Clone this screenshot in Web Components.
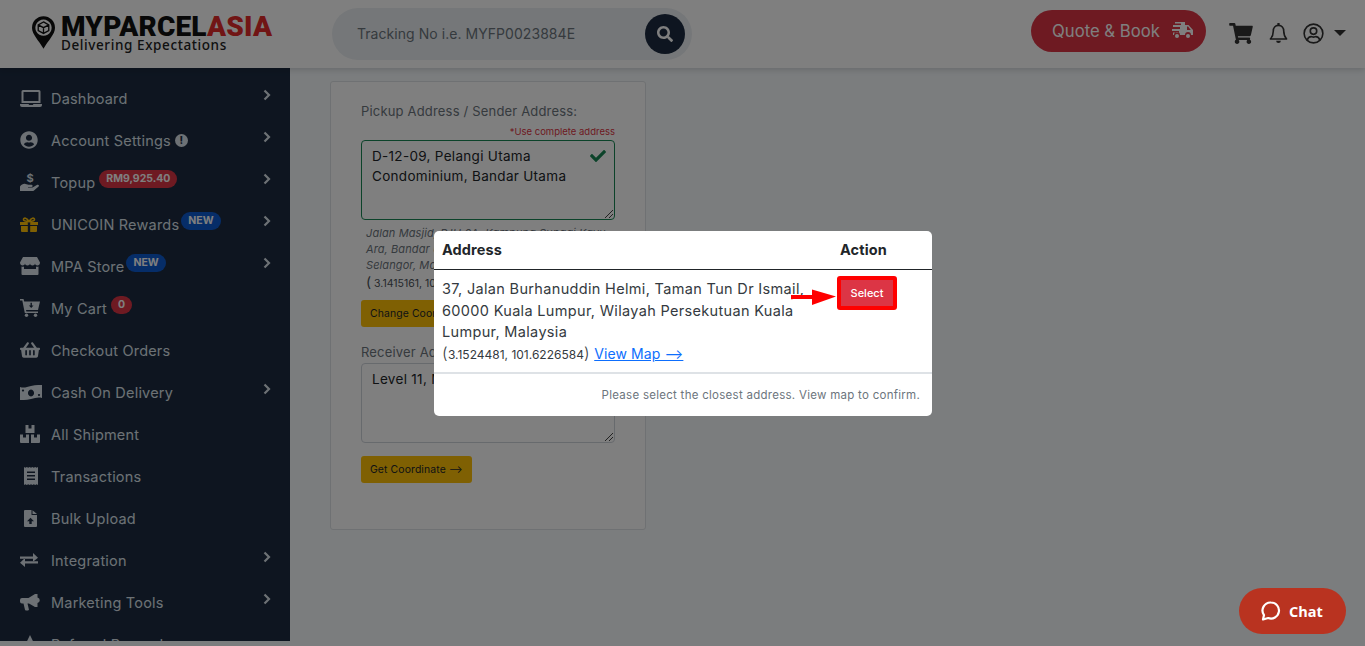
<!DOCTYPE html>
<html lang="en">
<head>
<meta charset="utf-8">
<title>MyParcelAsia</title>
<style>
  html, body { margin: 0; height: 100%; overflow: hidden; background: #f6fafd; }
  body { font-family: Inter, "Noto Sans", sans-serif; }
</style>
</head>
<body>
<mpa-app></mpa-app>

<script>
const ICONS = {
  laptop: '<svg viewBox="0 0 22 17" width="22" height="17"><path fill="currentColor" d="M3 0h16a1.5 1.5 0 0 1 1.5 1.5V13h-19V1.500A1.500 1.500 0 0 1 3 0zm.5 2v9h15V2z" fill-rule="evenodd"/><path fill="currentColor" d="M0 14h8.500l.7 1h3.600l.7-1H22v1a2 2 0 0 1-2 2H2a2 2 0 0 1-2-2z"/></svg>',
  user: '<svg viewBox="0 0 496 512" width="18" height="18"><path fill="currentColor" d="M248 8C111 8 0 119 0 256s111 248 248 248 248-111 248-248S385 8 248 8zm0 96c48.600 0 88 39.400 88 88s-39.400 88-88 88-88-39.400-88-88 39.400-88 88-88zm0 344c-58.700 0-111.300-26.600-146.500-68.200 18.800-35.400 55.600-59.800 98.500-59.800 2.400 0 4.800.4 7.100 1.100 13 4.200 26.600 6.900 40.900 6.900 14.300 0 28-2.700 40.900-6.900 2.300-.7 4.700-1.100 7.100-1.100 42.900 0 79.700 24.400 98.500 59.800C359.300 421.400 306.700 448 248 448z"/></svg>',
  topup: '<svg viewBox="0 0 20 20" width="20" height="20"><path fill="currentColor" d="M0 14.500c1.500-2 3.500-3 5.500-2.500l3 .8h3a1 1 0 0 1 0 2.200H8v.6h4.500l4.800-2.800c1.300-.6 2.300.9 1.300 1.800l-4.600 3.800c-.5.4-1 .6-1.600.6H0z"/><text x="10" y="9.500" font-size="11" font-weight="700" text-anchor="middle" fill="currentColor" font-family="Inter">$</text></svg>',
  gift: '<svg viewBox="0 0 18 15" width="18" height="15"><path fill="currentColor" d="M0 5h7.800v3H0zM10.200 5H18v3h-7.800zM1 9h6.800v6H2a1 1 0 0 1-1-1zM10.200 9H17v5a1 1 0 0 1-1 1h-5.800z"/><path fill="none" stroke="currentColor" stroke-width="1.600" d="M9 4.500C7 .5 3.500.3 3.500 2.600 3.500 4 5.500 4.500 9 4.500c3.500 0 5.500-.5 5.500-1.900C14.500.3 11 .5 9 4.500z"/></svg>',
  store: '<svg viewBox="0 0 20 18" width="20" height="18"><path fill="currentColor" d="M3 0h14l3 5.500c0 2-1.200 3-2.500 3S15 7.500 15 6.500c0 1-1.200 2-2.500 2S10 7.500 10 6.500c0 1-1.200 2-2.500 2S5 7.500 5 6.500c0 1-1.200 2-2.500 2S0 7.500 0 5.500z"/><path fill="currentColor" fill-rule="evenodd" d="M1.500 9.500c1 .3 2 .2 2.500 0V12h12V9.500c.5.200 1.500.3 2.500 0V17a1 1 0 0 1-1 1h-15a1 1 0 0 1-1-1z"/></svg>',
  cart: '<svg viewBox="0 0 20 18" width="20" height="18"><path fill="currentColor" d="M0 0h3.500l.7 2.500H20l-2 8.500H6l.4 1.500H18v1.500H4.800L2.300 1.500H0z"/><circle cx="6.500" cy="16.300" r="1.700" fill="currentColor"/><circle cx="15.500" cy="16.300" r="1.700" fill="currentColor"/><path fill="#1c2b41" d="M10.500 3.800h1.400v2.600h1.600l-2.300 2.600-2.300-2.600h1.600z"/></svg>',
  basket: '<svg viewBox="0 0 576 512" width="20" height="18"><path fill="currentColor" d="M576 216v16c0 13.255-10.745 24-24 24h-8l-26.113 182.788C514.509 462.435 494.257 480 470.370 480H105.630c-23.887 0-44.139-17.565-47.518-41.212L32 256h-8c-13.255 0-24-10.745-24-24v-16c0-13.255 10.745-24 24-24h67.341l106.780-146.821c10.395-14.292 30.407-17.453 44.701-7.058 14.293 10.395 17.453 30.408 7.058 44.701L170.477 192h235.046L326.120 82.821c-10.395-14.292-7.234-34.306 7.059-44.701 14.291-10.395 34.306-7.235 44.701 7.058L484.659 192H552c13.255 0 24 10.745 24 24zM312 392V280c0-13.255-10.745-24-24-24s-24 10.745-24 24v112c0 13.255 10.745 24 24 24s24-10.745 24-24zm112 0V280c0-13.255-10.745-24-24-24s-24 10.745-24 24v112c0 13.255 10.745 24 24 24s24-10.745 24-24zm-224 0V280c0-13.255-10.745-24-24-24s-24 10.745-24 24v112c0 13.255 10.745 24 24 24s24-10.745 24-24z"/></svg>',
  cash: '<svg viewBox="0 0 22 15" width="22" height="15"><path fill="currentColor" fill-rule="evenodd" d="M0 2c4 1.500 7-.2 11-1s7-1.200 11-1v13c-4-1.200-7 .2-11 1s-7 1.200-11 1zm11 2.500a3 3.500 0 1 0 .01 0zM3 4.500a1 1 0 1 0 .01 0zM19 9a1 1 0 1 0 .01 0z"/></svg>',
  boxes: '<svg viewBox="0 0 20 18" width="20" height="18"><path fill="currentColor" d="M5.500 0h3v3.500h3V0h3v8h-9zM0 9.500h3v3h3v-3h3V18H1a1 1 0 0 1-1-1zM11 9.500h3v3h3v-3h3V17a1 1 0 0 1-1 1h-8z"/></svg>',
  receipt: '<svg viewBox="0 0 14 18" width="14" height="18"><path fill="currentColor" fill-rule="evenodd" d="M0 0l1.400.8L2.800 0l1.400.8L5.600 0 7 .8 8.400 0l1.400.8L11.200 0l1.400.8L14 0v18l-1.400-.8-1.400.8-1.400-.8-1.400.8L7 17.200 5.600 18l-1.400-.8-1.400.8-1.400-.8L0 18zM3 4.500v1.400h8V4.500zm0 3.500v1.400h8V8zm0 3.500v1.400h8v-1.400z"/></svg>',
  upload: '<svg viewBox="0 0 13 17" width="13" height="17"><path fill="currentColor" fill-rule="evenodd" d="M1 0h6.500v4.500a.5.500 0 0 0 .5.500h5v11a1 1 0 0 1-1 1H1a1 1 0 0 1-1-1V1a1 1 0 0 1 1-1zM6.500 7.800L3 11.300h2.300V14h2.400v-2.700H10z"/><path fill="currentColor" d="M8.500.2L13 4h-4.500z"/></svg>',
  exchange: '<svg viewBox="0 0 18 14" width="18" height="14"><path fill="currentColor" d="M0 3.500h13V0l5 4.800-5 4-.0-3.100H0zM18 8.300H5V5l-5 4.700 5 4.300v-3.500h13z"/></svg>',
  bullhorn: '<svg viewBox="0 0 20 17" width="20" height="17"><path fill="currentColor" d="M0 6a2 2 0 0 1 2-2h6.500L15 0h2.500v3.500a2.800 2.800 0 0 1 0 5.500V13H15l-6-3.500H7.500L8.800 15a1 1 0 0 1-1 1.500H6a1 1 0 0 1-1-.8L3.500 9.500H2a2 2 0 0 1-2-2z"/></svg>',
  star: '<svg viewBox="0 0 20 18" width="20" height="18"><path fill="currentColor" d="M10 0l3 6.200 7 .9-5 4.800 1.200 6.800L10 15.500 3.800 18.700 5 11.900 0 7.100l7-.9z"/></svg>',
  search: '<svg viewBox="0 0 512 512" width="16" height="16"><path fill="currentColor" d="M505 442.700L405.300 343c-4.500-4.500-10.600-7-17-7H372c27.600-35.300 44-79.700 44-128C416 93.100 322.900 0 208 0S0 93.100 0 208s93.100 208 208 208c48.300 0 92.700-16.400 128-44v16.300c0 6.400 2.500 12.500 7 17l99.700 99.700c9.400 9.400 24.600 9.400 33.900 0l28.300-28.300c9.400-9.400 9.400-24.600.1-34zM208 336c-70.700 0-128-57.200-128-128 0-70.700 57.200-128 128-128 70.700 0 128 57.200 128 128 0 70.700-57.200 128-128 128z"/></svg>',
  truck: '<svg viewBox="0 0 22 17" width="22" height="17"><path fill="currentColor" d="M4 0h10v3h3.500L22 8v5h-2a3 3 0 0 0-6 0H9a3 3 0 0 0-6 0H2v-2.500h6V9H1V7h8V5H2V3h8V1.500H4zM16 4.500V8h3.800l-2.700-3.500z"/><circle cx="6" cy="14" r="2" fill="currentColor"/><circle cx="17" cy="14" r="2" fill="currentColor"/></svg>',
  bigcart: '<svg viewBox="0 0 576 512" width="24" height="21"><path fill="currentColor" d="M528.120 301.319l47.273-208C578.806 78.301 567.391 64 551.990 64H159.208l-9.166-44.810C147.758 8.021 137.930 0 126.529 0H24C10.745 0 0 10.745 0 24v16c0 13.255 10.745 24 24 24h69.883l70.248 343.435C147.325 417.100 136 435.222 136 456c0 30.928 25.072 56 56 56s56-25.072 56-56c0-15.674-6.447-29.835-16.824-40h209.647C430.447 426.165 424 440.326 424 456c0 30.928 25.072 56 56 56s56-25.072 56-56c0-22.172-12.888-41.332-31.579-50.405l5.517-24.276c3.413-15.018-8.002-29.319-23.403-29.319H218.117l-6.545-32h293.145c11.206 0 20.920-7.754 23.403-18.681z"/></svg>',
  bell: '<svg viewBox="0 0 20 22" width="19" height="21"><path fill="none" stroke="currentColor" stroke-width="1.700" stroke-linejoin="round" d="M10 2.500c-3.500 0-5.500 2.600-5.500 6 0 4.500-1 6-3 8.300h17c-2-2.300-3-3.800-3-8.300 0-3.400-2-6-5.500-6z"/><path fill="currentColor" d="M8.800 0h2.400v2.500H8.800zM7.500 18.500h5a2.500 2.500 0 0 1-5 0z"/></svg>',
  account: '<svg viewBox="0 0 22 22" width="21" height="21"><g fill="none" stroke="currentColor" stroke-width="1.700"><circle cx="11" cy="11" r="9.800"/><circle cx="11" cy="8.500" r="3.400"/><path d="M4.300 18c1-2.800 3-3.700 4.200-3.700.8 0 1.300.5 2.500.5s1.700-.5 2.500-.5c1.200 0 3.200.9 4.200 3.700"/></g></svg>',
  check: '<svg viewBox="0 0 512 512" width="16" height="16"><path fill="currentColor" d="M173.898 439.404l-166.400-166.400c-9.997-9.997-9.997-26.206 0-36.204l36.203-36.204c9.997-9.998 26.207-9.998 36.204 0L192 312.690 432.095 72.596c9.997-9.997 26.207-9.997 36.204 0l36.203 36.204c9.997 9.997 9.997 26.206 0 36.204l-294.400 294.401c-9.998 9.997-26.207 9.997-36.204-.001z"/></svg>'
};

class MpaLogo extends HTMLElement {
  constructor() {
    super();
    this.attachShadow({ mode: "open" });
    this.shadowRoot.innerHTML = `
      <style>
        :host { display: flex; align-items: flex-start; gap: 6px; }
        .words { display: flex; flex-direction: column; }
        .main {
          font: 900 28px/24px Roboto, sans-serif;
          color: #111;
          letter-spacing: 0.2px;
        }
        .main span { color: #e32b2b; }
        .sub {
          font: 500 13.500px/16px "Noto Sans", sans-serif;
          color: #222;
          letter-spacing: 0.6px;
          margin-top: -2px;
        }
      </style>
      <svg viewBox="0 0 24 34" width="23" height="33" style="margin-top:16px">
        <path fill="#111" fill-rule="evenodd" d="M12 0a12 12 0 0 1 12 12c0 7-7 13-12 22C7 25 0 19 0 12A12 12 0 0 1 12 0zm0 3.500a8.500 8.500 0 1 0 .01 0z"/>
        <path fill="none" stroke="#111" stroke-width="1.400" d="M12 6l5.500 3v6L12 18l-5.500-3V9zM6.500 9l5.500 3 5.500-3M12 12v6"/>
      </svg>
      <div class="words" style="margin-top:15px">
        <div class="main">MYPARCEL<span>ASIA</span></div>
        <div class="sub">Delivering Expectations</div>
      </div>`;
  }
}

class MpaHeader extends HTMLElement {
  constructor() {
    super();
    this.attachShadow({ mode: "open" });
    this.shadowRoot.innerHTML = `
      <style>
        :host {
          display: flex;
          align-items: flex-start;
          height: 68px;
          background: #fff;
          box-shadow: 0 2px 6px rgba(0, 0, 0, 0.15);
          position: relative;
          z-index: 1;
          color: #333;
        }
        mpa-logo { width: 332px; padding-left: 32px; box-sizing: border-box; height: 68px; }
        .search {
          width: 360px;
          height: 52px;
          margin-top: 8px;
          border-radius: 26px;
          background: #ebeff2;
          display: flex;
          align-items: center;
          justify-content: space-between;
          padding: 0 7px 0 25px;
          box-sizing: border-box;
          font-size: 14px;
          letter-spacing: 0.05px;
          color: #6c757d;
        }
        .search > span:first-child { margin-top: -2px; }
        .go {
          width: 40px;
          height: 40px;
          border-radius: 50%;
          background: #1c2b41;
          color: #fff;
          display: flex;
          align-items: center;
          justify-content: center;
        }
        .right { margin-left: auto; display: flex; align-items: center; height: 66px; padding-right: 19px; }
        .quote {
          width: 175px;
          height: 42px;
          border-radius: 21px;
          background: #dc3545;
          color: #fff;
          display: flex;
          align-items: center;
          padding-left: 21px;
          box-sizing: border-box;
          font-size: 16.700px;
          gap: 11px;
          margin-right: 23px;
          margin-top: -5px;
        }
        .quote svg { display: block; }
        .i { display: flex; }
        .caret { width: 0; height: 0; border: 6px solid transparent; border-top: 6px solid #333; border-bottom: 0; margin-left: 10px; }
      </style>
      <mpa-logo></mpa-logo>
      <div class="search"><span>Tracking No i.e. MYFP0023884E</span><span class="go">${ICONS.search}</span></div>
      <div class="right">
        <div class="quote"><span>Quote &amp; Book</span>${ICONS.truck}</div>
        <span class="i" style="margin-right:16px">${ICONS.bigcart}</span>
        <span class="i" style="margin-right:15px">${ICONS.bell}</span>
        <span class="i">${ICONS.account}</span>
        <span class="caret"></span>
      </div>`;
  }
}

class NavItem extends HTMLElement {
  constructor() {
    super();
    this.attachShadow({ mode: "open" });
  }
  connectedCallback() {
    const icon = this.getAttribute("icon");
    const arrow = this.hasAttribute("arrow");
    this.shadowRoot.innerHTML = `
      <style>
        :host {
          display: flex;
          align-items: center;
          height: 42px;
          flex: none;
          padding-left: 20px;
          color: #dbe3ea;
          font-size: 14.500px;
          position: relative;
        }
        .icon { width: 31px; box-sizing: border-box; flex: none; display: flex; color: var(--icon, #dbe3ea); padding-left: var(--shift, 0); }
        .label { display: flex; align-items: center; letter-spacing: 0.2px; }
        .chev { margin-left: auto; margin-right: 19px; margin-top: -7px; display: flex; }
      </style>
      <span class="icon">${ICONS[icon]}</span>
      <span class="label"><slot></slot></span>
      ${arrow ? '<span class="chev"><svg viewBox="0 0 8 12" width="8" height="12"><path fill="none" stroke="#dbe3ea" stroke-width="2.200" d="M1.500 1.500L6 6l-4.500 4.500"/></svg></span>' : ""}`;
  }
}

class NavBadge extends HTMLElement {
  constructor() {
    super();
    this.attachShadow({ mode: "open" });
    this.shadowRoot.innerHTML = `
      <style>
        :host {
          display: inline-block;
          background: var(--bg, #dc3545);
          color: #fff;
          font: 700 10.500px/18px Inter, sans-serif;
          padding: 0 7px;
          border-radius: 10px;
          margin-left: var(--gap, 4px);
          position: relative;
          top: -3px;
          letter-spacing: 0;
        }
      </style>
      <slot></slot>`;
  }
}

class MpaSidebar extends HTMLElement {
  constructor() {
    super();
    this.attachShadow({ mode: "open" });
    this.shadowRoot.innerHTML = `
      <style>
        :host {
          display: flex;
          flex-direction: column;
          flex: none;
          width: 290px;
          height: 573px;
          padding-top: 9px;
          box-sizing: border-box;
          overflow: hidden;
          background: #1c2b41;
        }
        .blue { --bg: #0d5bd0; --gap: 2px; }
        .info {
          display: inline-flex; width: 13px; height: 13px; border-radius: 50%;
          background: #dbe3ea; color: #1c2b41; font: 800 10px/13px Inter, sans-serif;
          justify-content: center; margin-left: 4px;
        }
      </style>
      <nav-item icon="laptop" arrow>Dashboard</nav-item>
      <nav-item icon="user" arrow>Account Settings<span class="info">!</span></nav-item>
      <nav-item icon="topup" arrow>Topup<nav-badge>RM9,925.40</nav-badge></nav-item>
      <nav-item icon="gift" arrow style="--icon:#ffc107">UNICOIN Rewards<nav-badge class="blue">NEW</nav-badge></nav-item>
      <nav-item icon="store" arrow>MPA Store<nav-badge class="blue">NEW</nav-badge></nav-item>
      <nav-item icon="cart">My Cart<nav-badge>0</nav-badge></nav-item>
      <nav-item icon="basket">Checkout Orders</nav-item>
      <nav-item icon="cash" arrow>Cash On Delivery</nav-item>
      <nav-item icon="boxes">All Shipment</nav-item>
      <nav-item icon="receipt" style="--shift:4px">Transactions</nav-item>
      <nav-item icon="upload" style="--shift:4px">Bulk Upload</nav-item>
      <nav-item icon="exchange" arrow>Integration</nav-item>
      <nav-item icon="bullhorn" arrow>Marketing Tools</nav-item>
      <nav-item icon="star">Referral Reward</nav-item>`;
  }
}

class AddressField extends HTMLElement {
  constructor() {
    super();
    this.attachShadow({ mode: "open" });
  }
  connectedCallback() {
    const ok = this.hasAttribute("valid");
    this.shadowRoot.innerHTML = `
      <style>
        :host { display: block; }
        .label { font-size: 13px; line-height: 20px; margin-bottom: 1px; color: #6c757d; letter-spacing: 0.18px; }
        .box {
          position: relative;
          height: 80px;
          box-sizing: border-box;
          border: 1px solid ${ok ? "#198754" : "#ced4da"};
          border-radius: 4px;
          padding: 5px 30px 0 10px;
          font-size: 13.500px;
          line-height: 20px;
          color: #212529;
          letter-spacing: 0.3px;
          background: #fff;
        }
        .check { position: absolute; right: 8px; top: 7px; color: #198754; display: flex; }
        .grip { position: absolute; right: 1px; bottom: 1px; }
      </style>
      <div class="label"><slot name="label"></slot></div>
      <slot name="note"></slot>
      <div class="box">
        <slot></slot>
        ${ok ? `<span class="check">${ICONS.check}</span>` : ""}
        <svg class="grip" viewBox="0 0 9 9" width="9" height="9"><path stroke="#444" stroke-width="1" d="M1 9L9 1M5 9L9 5"/></svg>
      </div>`;
  }
}

class GoldButton extends HTMLElement {
  constructor() {
    super();
    this.attachShadow({ mode: "open" });
    this.shadowRoot.innerHTML = `
      <style>
        :host {
          display: inline-block;
          background: #ffc107;
          color: #212529;
          font-size: 10.400px;
          line-height: 27px;
          height: 27px;
          padding: 0 9px;
          border-radius: 3px;
          letter-spacing: 0.12px;
        }
      </style>
      <slot></slot>`;
  }
}

class AddressCard extends HTMLElement {
  constructor() {
    super();
    this.attachShadow({ mode: "open" });
    this.shadowRoot.innerHTML = `
      <style>
        :host {
          display: block;
          width: 316px;
          height: 449px;
          box-sizing: border-box;
          margin: 13px 0 0 40px;
          padding: 19px 30px 0;
          background: #fff;
          border: 1px solid #dfe3e6;
          border-radius: 3px;
        }
        .need { text-align: right; color: #dc3545; font-size: 9.500px; line-height: 10px; margin: 6px 0 3px; }
        .meta { padding: 5px 5px 0; color: #6c757d; font-size: 11px; font-style: italic; line-height: 16px; letter-spacing: 0.1px; }
        .coord { font-style: normal; font-size: 10.500px; line-height: 18px; color: #495057; letter-spacing: 0; }
        .coord b { font-weight: 400; font-size: 14px; }
        gold-button { display: block; width: max-content; }
      </style>
      <address-field valid>
        <span slot="label">Pickup Address / Sender Address:</span>
        <div slot="note" class="need">*Use complete address</div>
        D-12-09, Pelangi Utama<br>Condominium, Bandar Utama
      </address-field>
      <div class="meta">Jalan Masjid, PJU 6A, Kampung Sungai Kayu<br>Ara, Bandar Utama, Petaling Jaya,<br>Selangor, Malaysia<br><span class="coord"><b>(</b> 3.1415161, 101.6066 <b>)</b></span></div>
      <gold-button style="margin-top:7px">Change Coordinate</gold-button>
      <address-field style="margin-top:15px">
        <span slot="label">Receiver Address:</span>
        Level 11, Menara Hap Seng
      </address-field>
      <gold-button style="margin-top:13px">Get Coordinate ⟶</gold-button>`;
  }
}

class AddressModal extends HTMLElement {
  constructor() {
    super();
    this.attachShadow({ mode: "open" });
    this.shadowRoot.innerHTML = `
      <style>
        :host {
          display: block;
          position: absolute;
          z-index: 3;
          left: 434px;
          top: 231px;
          width: 498px;
          height: 185px;
          background: #fff;
          border-radius: 5px;
          color: #212529;
        }
        .head {
          display: grid;
          grid-template-columns: 398px auto;
          height: 38px;
          align-items: center;
          padding-left: 8px;
          border-bottom: 1px solid #212529;
          font-size: 14.500px;
          font-weight: 700;
          line-height: 36px;
          letter-spacing: 0.1px;
        }
        .row {
          display: grid;
          grid-template-columns: 395px auto;
          height: 104px;
          padding: 8px 0 0 8px;
          box-sizing: border-box;
          border-bottom: 2px solid #dee2e6;
          font-size: 14.500px;
          line-height: 21.500px;
          color: #343a40;
          letter-spacing: 0.33px;
          position: relative;
        }
        .addr { white-space: nowrap; }
        .coord { font-size: 12px; letter-spacing: 0; }
        .paren { font-size: 16px; font-weight: 300; }
        a { color: #0d6efd; text-decoration: underline; font-size: 14px; letter-spacing: 0.1px; }
        .select {
          width: 52px;
          height: 26px;
          margin-top: -2px;
          border: 4px solid #f00;
          border-radius: 3px;
          background: #dc3545;
          color: #fff;
          font-size: 11px;
          font-weight: 500;
          line-height: 26px;
          text-align: center;
          letter-spacing: 0;
        }
        .arrow { position: absolute; left: 357px; top: 19px; }
        .foot { text-align: right; padding: 13px 12px 0 0; font-size: 11.500px; line-height: 16px; color: #6c757d; letter-spacing: 0.27px; }
      </style>
      <div class="head"><span>Address</span><span>Action</span></div>
      <div class="row">
        <div class="addr">37, Jalan Burhanuddin Helmi, Taman Tun Dr Ismail,<br>60000 Kuala Lumpur, Wilayah Persekutuan Kuala<br>Lumpur, Malaysia<br><span class="paren">(</span><span class="coord">3.1524481, 101.6226584</span><span class="paren">)</span> <a>View Map ⟶</a></div>
        <div class="select">Select</div>
        <svg class="arrow" viewBox="0 0 45 16" width="45" height="16"><path fill="#f00" d="M0 6h21V.5L45 7.500 21 16V10H2a2 2 0 0 1-2-4z"/></svg>
      </div>
      <div class="foot">Please select the closest address. View map to confirm.</div>`;
  }
}

class ChatButton extends HTMLElement {
  constructor() {
    super();
    this.attachShadow({ mode: "open" });
    this.shadowRoot.innerHTML = `
      <style>
        :host {
          position: absolute;
          z-index: 3;
          left: 1239px;
          top: 588px;
          width: 107px;
          height: 46px;
          border-radius: 23px;
          background: #b93320;
          color: #fff;
          display: flex;
          align-items: center;
          gap: 8px;
          padding-left: 22px;
          box-sizing: border-box;
          font: 700 14.500px "Open Sans", sans-serif;
        }
      </style>
      <svg viewBox="0 0 20 20" width="20" height="20"><path fill="none" stroke="#fff" stroke-width="2.200" stroke-linejoin="round" d="M10 1.500a8 8 0 1 1-2.800 15.500L2 18.500l1-4.400A8 8 0 0 1 10 1.500z"/></svg>
      <span>Chat</span>`;
  }
}

class MpaApp extends HTMLElement {
  constructor() {
    super();
    this.attachShadow({ mode: "open" });
    this.shadowRoot.innerHTML = `
      <style>
        :host { display: block; position: relative; width: 1365px; height: 646px; overflow: hidden; }
        .body { display: flex; align-items: flex-start; }
        .dim { position: absolute; inset: 0; z-index: 2; background: rgba(0, 0, 0, 0.5); }
      </style>
      <mpa-header></mpa-header>
      <div class="body">
        <mpa-sidebar></mpa-sidebar>
        <address-card></address-card>
      </div>
      <div class="dim"></div>
      <address-modal></address-modal>
      <chat-button></chat-button>`;
  }
}

customElements.define("mpa-logo", MpaLogo);
customElements.define("mpa-header", MpaHeader);
customElements.define("nav-item", NavItem);
customElements.define("nav-badge", NavBadge);
customElements.define("mpa-sidebar", MpaSidebar);
customElements.define("address-field", AddressField);
customElements.define("gold-button", GoldButton);
customElements.define("address-card", AddressCard);
customElements.define("address-modal", AddressModal);
customElements.define("chat-button", ChatButton);
customElements.define("mpa-app", MpaApp);
</script>
</body>
</html>
